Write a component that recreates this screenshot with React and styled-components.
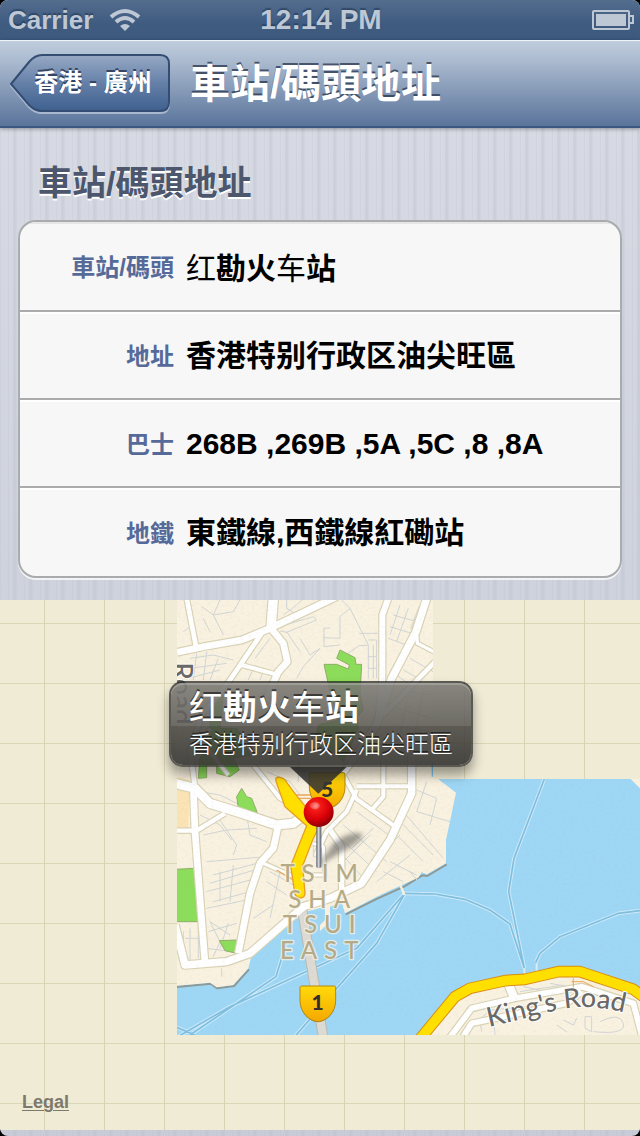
import React from "react";
import styled, { createGlobalStyle } from "styled-components";

const sans = `"Liberation Sans", "Noto Sans CJK TC", "Noto Sans CJK SC", sans-serif`;

const Global = createGlobalStyle`
  *, *::before, *::after { box-sizing: border-box; }
  body { margin: 0; background: #000; font-family: ${sans}; }
  h1, h2, p, dl, dt, dd { margin: 0; }
`;

const Screen = styled.div`
  display: flex;
  flex-direction: column;
  min-height: 100vh;
  overflow: hidden;
  border-radius: 8px;
  background:
    repeating-linear-gradient(90deg, transparent 0 13px, rgba(180, 188, 206, 0.3) 13px 16px),
    repeating-linear-gradient(90deg, rgba(180, 188, 206, 0.18) 0 1px, transparent 1px 8px),
    linear-gradient(#d9dce4, #ced2dc 600px, #c9ccd7);
`;

const StatusBar = styled.div`
  display: grid;
  grid-template-columns: 1fr auto 1fr;
  align-items: center;
  height: 40px;
  padding: 0 6px 0 8px;
  background: linear-gradient(#536d8e, #3f5b80 60%, #3e5a7f);
  color: #bec8d5;
  font-weight: bold;
  text-shadow: 0 -2px 1px rgba(30, 50, 80, 0.55);
`;

const Carrier = styled.span`
  display: flex;
  align-items: center;
  gap: 16px;
  font-size: 26px;
  line-height: 40px;
`;

const Clock = styled.time`
  font-size: 28px;
  line-height: 40px;
`;

const Battery = styled.svg`
  justify-self: end;
`;

const NavBar = styled.header`
  position: relative;
  z-index: 1;
  display: flex;
  align-items: center;
  gap: 20px;
  height: 88px;
  padding: 0 10px;
  border-top: 1px solid #eef3f8;
  border-bottom: 2px solid #3a5781;
  background: linear-gradient(#c0cddd, #a9b9ce 25%, #5a749b);
  box-shadow: 0 1px 4px rgba(0, 0, 0, 0.35);
`;

const BackButton = styled.button`
  position: relative;
  width: 160px;
  height: 60px;
  padding: 0 0 2px 6px;
  border: 0;
  background: none;
  color: #fff;
  font: bold 24px/58px ${sans};
  white-space: nowrap;
  text-shadow: 0 -2px 0 rgba(30, 45, 75, 0.75);
`;

const BackShape = styled.svg`
  position: absolute;
  inset: 0;
  z-index: -1;
`;

const Title = styled.h1`
  color: #fff;
  font-size: 40px;
  font-weight: bold;
  line-height: 60px;
  white-space: nowrap;
  text-shadow: 0 -2px 0 rgba(40, 52, 75, 0.75);
`;

const Details = styled.section`
  padding: 28px 18px 22px;
`;

const SectionTitle = styled.h2`
  padding-left: 20px;
  margin-bottom: 10px;
  color: #4c566c;
  font-size: 34px;
  font-weight: bold;
  line-height: 54px;
  text-shadow: 0 2px 0 #fff;
`;

const Card = styled.dl`
  overflow: hidden;
  border: 2px solid #aaabad;
  border-radius: 18px;
  background: #f7f7f7;
  box-shadow: 0 2px 0 rgba(255, 255, 255, 0.75);
`;

const Row = styled.div`
  display: grid;
  grid-template-columns: 154px 1fr;
  align-items: center;
  gap: 12px;
  height: 88px;
  padding-top: 2px;
  box-shadow: inset 0 2px 0 ${(p) => (p.$first ? "#e6e6e6" : "#fff")};
  & + & { border-top: 2px solid #aaabad; }
  &:last-child { height: 90px; }
`;

const Label = styled.dt`
  padding-top: 2px;
  color: #566a99;
  font-size: 24px;
  font-weight: bold;
  line-height: 40px;
  text-align: right;
  white-space: nowrap;
`;

const Value = styled.dd`
  color: #000;
  font-size: 30px;
  font-weight: bold;
  line-height: 40px;
  white-space: nowrap;
`;

const Light = styled.span`
  font-family: "Noto Sans CJK SC", sans-serif;
  font-weight: normal;
`;

const MapView = styled.main`
  position: relative;
  display: flex;
  justify-content: center;
  height: 530px;
  overflow: hidden;
  background:
    linear-gradient(90deg, #d9d3b3 1px, transparent 1px) calc(50% - 6px) 0 / 60px 60px,
    linear-gradient(#dcd6b7 1px, transparent 1px) 0 23px / 60px 60px,
    #f0ebd5;
`;

const MapArt = styled.svg`
  flex: none;
  width: 640px;
  height: 530px;
`;

const Callout = styled.div`
  position: absolute;
  top: 81px;
  left: calc(50% - 151px);
  width: 304px;
  height: 86px;
  padding: 4px 18px;
  border: 2px solid rgba(40, 40, 38, 0.75);
  border-radius: 14px;
  background: linear-gradient(rgba(125, 123, 118, 0.9), rgba(88, 86, 82, 0.86) 52%, rgba(68, 66, 62, 0.86) 52%, rgba(56, 55, 52, 0.92));
  background-clip: padding-box;
  box-shadow: 0 8px 12px rgba(0, 0, 0, 0.38), inset 0 2px 0 rgba(255, 255, 255, 0.2);
  color: #fff;
  white-space: nowrap;
  text-shadow: 0 -2px 0 rgba(0, 0, 0, 0.55);
`;

const CalloutTitle = styled.p`
  font-size: 34px;
  font-weight: bold;
  line-height: 38px;
`;

const CalloutText = styled.p`
  font-size: 24px;
  font-weight: 300;
  line-height: 36px;
`;

const Legal = styled.a`
  position: absolute;
  left: 22px;
  bottom: 18px;
  color: #7d796c;
  font-size: 18px;
  font-weight: bold;
  line-height: 20px;
  text-decoration: underline;
  text-decoration-thickness: 1px;
  text-underline-offset: 2px;
`;

const thinStreets = `
M150 15L130 60L160 120 M95 35L130 60L190 50L210 15 M340 60L380 30L395 15 M345 90L430 65L440 75L350 112L330 108 M350 15V40L375 55
M510 65L540 40L515 15 M510 65V130L462 128 M540 40L595 150L567 152L520 185 M462 155V100L480 98 M462 155L510 150 M390 130L420 180L450 160L400 215L380 250 M350 110L390 170
M567 115H625 M595 135H620V250 M595 150V250 M610 150V250 M595 185H620 M595 220H620 M670 60L740 80 M660 95L725 115 M655 130L710 150 M690 30L660 120 M715 40L680 140
M60 190L130 180L190 195 M60 220L170 205 M55 250L150 225 M80 175L70 255 M110 170L100 255 M145 190L120 255 M40 110L60 95 M120 110L100 70 M255 190L300 130 M250 220L235 255 M280 230L270 255
M680 240L720 270 M700 225L745 250 M720 190L789 230 M700 290L789 300 M680 340L789 370 M670 390L780 410 M650 430L770 450 M720 280L680 460 M760 290L720 480
M385 430V560 M290 530L360 560L390 600 M90 590L150 600L250 650 M100 720L170 705L260 700 M110 800L290 785 M130 840L280 800 M120 865L270 820 M110 890L260 850 M130 920L240 890 M150 830V920 M190 810L180 920 M110 940L230 915 M140 660L200 750L190 780 M230 660L240 720L290 740 M90 660L150 690L185 735
M300 830L370 870 M290 860L350 900 M330 830L300 970 M250 970L310 930 M120 980L180 1020 M115 1010L200 985 M60 1000V1100 M40 1010V1085 M85 980V1090 M45 1030H85 M120 980L150 1040L130 1085 M110 1060L190 1070 M175 985L150 1060 M155 1120V1145
M520 690L650 800 M500 720L620 830 M490 750L590 860 M560 650L670 730 M545 760L610 700 M520 800L600 720 M640 770L690 720 M690 680L790 780 M680 720L760 800 M700 650L820 790 M770 560L740 650L840 680 M740 585L800 610L780 690 M660 800L740 840 M640 830L700 860 M720 830L745 860 M620 860L720 780 M430 750L460 760V790L430 785Z
M860 1310L910 1250L1050 1215 M890 1310L960 1245L1120 1230 M1060 1175L1110 1185L1115 1215 M1140 1165L1220 1180 M1050 1190L1180 1170 M1160 1290L1190 1310 M1180 1275L1210 1290L1220 1270 M1245 1265H1265V1310L1245 1300Z M1290 1280Q1350 1250 1360 1285T1270 1310 M930 1280L935 1310 M970 1270L975 1320`;

const streets = [
  ["M50 10L80 165", 14], ["M21 172L100 155L215 135L300 100L500 5", 20],
  ["M310 10L303 100", 28], ["M303 100L340 145L352 200L325 230L280 330", 20],
  ["M275 115L180 255L95 360L60 470L75 575", 14], ["M215 210L325 240", 12],
  ["M655 10L637 60V250L625 380L560 480L500 560", 18],
  ["M770 10L738 110L665 250L620 390L560 480", 22], ["M740 115L742 145L795 172", 10],
  ["M795 200L640 360", 14], ["M120 400L95 440L175 540", 10], ["M250 510L330 610L400 650", 12],
  ["M15 565L75 580L120 625L200 650L320 690L370 685L440 630", 27],
  ["M70 580L75 710L95 975L105 1105", 20], ["M15 707H80L165 655", 13],
  ["M325 690L310 760L270 805L240 895L205 1075", 20], ["M270 800L365 842", 10],
  ["M725 480V595L660 735L575 865L480 910L400 935L240 1075L170 1100L45 1110L15 990", 22],
  ["M640 490V605L605 645", 12], ["M560 574H725", 12], ["M520 540L560 612L680 698", 12],
  ["M560 585L530 650L470 710L440 775", 12], ["M480 705L515 755V890", 16], ["M425 840H465L460 755L430 745", 9],
  ["M830 1340L905 1240L1035 1210L1235 1175L1390 1225L1415 1320", 17],
  ["M870 1340L905 1285L1190 1225L1235 1190", 17], ["M1015 1165L1035 1215", 25],
];

const ferries = `M15 1330L180 1235L560 1060L700 900 M60 1320L200 1225L318 1145L350 1040 M15 1295L75 1320 M370 1330L500 1180L620 1045L705 895
M700 895L795 897L885 913L960 945L1020 987L1063 1120 M1123 552L1032 790L1016 890L1063 1120 M1097 1102L1110 1075L1170 1025L1345 955L1410 947`;

const mainRoad = "M735 1350L855 1205L900 1180L1005 1157L1065 1153L1165 1130H1230L1390 1183L1420 1205";
const highway = "M319 562Q312 545 330 547Q345 550 350 562L382 605L432 665L445 700L428 735L398 812L405 895Q405 908 392 909Q376 908 374 893L362 812L410 692L345 635Z";

function Shield({ x, y, children }) {
  return (
    <g>
      <path d={`M${x} ${y + 6}q0-5 5-5h97q5 0 5 5v38c0 36-27 62-53 64c-27-2-54-28-54-64z`} fill="#6b5a20" opacity=".5" />
      <path d={`M${x} ${y + 4}q0-5 5-5h97q5 0 5 5v38c0 36-27 62-53 64c-27-2-54-28-54-64z`} fill="url(#shield)" stroke="#b58a10" strokeWidth="3" />
      <text x={x + 53} y={y + 72} textAnchor="middle" fontFamily="Lato, sans-serif" fontWeight="900" fontSize="63" fill="#33302a">{children}</text>
    </g>
  );
}

function StreetMap() {
  return (
    <MapArt viewBox="-510 15 1920 1590" role="img" aria-label="Tsim Sha Tsui East">
      <defs>
        <clipPath id="tiles"><path d="M21 15H789V552H1410V1320H21Z" /></clipPath>
        <linearGradient id="shield" x2="0" y2="1"><stop stopColor="#ffda0a" /><stop offset="1" stopColor="#f5a800" /></linearGradient>
        <radialGradient id="ball" cx=".4" cy=".3" r=".7">
          <stop stopColor="#ff8078" /><stop offset=".22" stopColor="#f51a16" /><stop offset=".65" stopColor="#d80008" /><stop offset="1" stopColor="#8e0006" />
        </radialGradient>
        <linearGradient id="needle"><stop stopColor="#555b66" /><stop offset=".45" stopColor="#d5d8df" /><stop offset="1" stopColor="#4d535e" /></linearGradient>
        <filter id="soft" x="-30%" y="-30%" width="160%" height="160%"><feGaussianBlur stdDeviation="8" /></filter>
        <filter id="paper" x="0" y="0" width="100%" height="100%">
          <feTurbulence type="fractalNoise" baseFrequency=".09 .14" numOctaves="2" seed="4" />
          <feColorMatrix values="0 0 0 0 .4  0 0 0 0 .4  0 0 0 0 .35  1.6 0 0 0 -.72" />
        </filter>
      </defs>
      <g clipPath="url(#tiles)" strokeLinejoin="round" fill="none">
        <rect x="21" y="15" width="1389" height="1305" fill="#9ed7f5" />
        <path d={ferries} stroke="#cdeafa" strokeWidth="11" />
        <path d={ferries} stroke="#7fbfe0" strokeWidth="5" />
        <path d="M15 1173L120 1163L140 1177L190 1170L235 1120 M525 955L620 908L700 872L755 838L770 840L828 805" stroke="#8d9a98" strokeWidth="6" transform="translate(2 3)" />
        <path d="M15 0H789V500L805 553L858 593L828 735V805L770 838L755 832L745 848L700 868L620 905L525 955L515 922L480 935V980L450 1008V990L465 975V935L390 955L245 1080L235 1120L190 1170L140 1177L120 1163L15 1173Z" fill="#faf2e0" />
        <path d="M690 868L703 900" stroke="#faf2e0" strokeWidth="7" />
        <path d="M1375 545L1415 585V545Z" fill="#faf2e0" />
        <path d="M720 1340L855 1205L1005 1157L1230 1130L1420 1205V1340Z" fill="#faf2e0" />
        <path d="M21 545L60 555L55 700H21Z" fill="#fbe3b4" />
        <path d="M785 505L790 500V545H785Z" fill="#7fc7ee" />
        <path d={thinStreets} stroke="#d0d5d5" strokeWidth="3" />
        <g fill="#8cdd5a" stroke="#8fae68" strokeWidth="3">
          <path d="M510 165L555 188L558 208H575L570 300L580 345L562 365L565 400L520 500L440 420L445 390L505 375L480 290L462 208H500L535 222L538 210L500 190Z" />
          <path d="M160 300L150 400H200L240 480L190 490L208 525L180 545L140 535V510H110V548L85 550L90 490L120 440V330Z" />
          <path d="M200 605L215 580L230 605L245 610L262 653L205 638Z" />
          <path d="M15 823L75 820L85 980H15Z" />
          <path d="M148 1037L200 1035V1075L165 1067Z" />
        </g>
        <path d="M720 100L745 35L760 50L735 115Z" fill="#dedbd0" />
        {streets.map(([d, w]) => <path key={d} d={d} stroke="#d9d3b6" strokeWidth={w + 7} />)}
        <path d="M395 935L460 1330" stroke="#b9bab4" strokeWidth="31" />
        <path d="M395 935L460 1330" stroke="#dedbd4" strokeWidth="25" />
        {streets.map(([d, w]) => <path key={d} d={d} stroke="#fff" strokeWidth={w} />)}
        <path d="M370 600H440M380 610H430M320 825L370 855" stroke="#eda75b" strokeWidth="4" />
        <path d="M1205 1160L1240 1160L1270 1175M1210 1150V1185" stroke="#eda75b" strokeWidth="3" />
        <path d="M1063 1120V1140M1100 1105V1135" stroke="#dcebec" strokeWidth="6" />
        <rect x="21" y="15" width="1389" height="1305" filter="url(#paper)" opacity=".12" />
        <path d={highway} fill="#ffdf00" stroke="#e5a022" strokeWidth="4" />
        <path d={mainRoad} stroke="#d88d13" strokeWidth="35" />
        <path d={mainRoad} stroke="#ffdf00" strokeWidth="29" />
        <g fontFamily="Lato, sans-serif" fontWeight="500" paintOrder="stroke">
          <path id="kings" d="M957 1296C1070 1270 1130 1252 1190 1240C1250 1230 1310 1238 1400 1262" />
          <text fontSize="81" fill="#6a6966" stroke="#fff" strokeWidth="6"><textPath href="#kings">King's Road</textPath></text>
          <text transform="translate(6 202) rotate(90)" fontSize="84" fill="#6a6966" stroke="#fff" strokeWidth="6">Road</text>
          <text fontSize="72" fill="#b5aa87" stroke="#fbf6e8" strokeWidth="8" strokeOpacity=".7" textAnchor="middle" letterSpacing="21">
            <tspan x="458" y="862">TSIM</tspan>
            <tspan x="458" y="939">SHA</tspan>
            <tspan x="458" y="1015">TSUI</tspan>
            <tspan x="458" y="1092">EAST</tspan>
          </text>
        </g>
        <Shield x={390} y={1174}>1</Shield>
        <Shield x={418} y={534}>5</Shield>
      </g>
      <path d="M448 808L490 745Q535 708 575 715Q585 730 535 760Q490 785 448 812Z" fill="#444" opacity=".5" filter="url(#soft)" />
      <rect x="439" y="685" width="15" height="134" rx="5" fill="url(#needle)" />
      <path d="M360 516L445 596L530 516Z" fill="#383734" opacity=".88" />
      <circle cx="446" cy="651" r="45" fill="url(#ball)" />
      <ellipse cx="434" cy="632" rx="15" ry="10" fill="#fff" opacity=".2" />
    </MapArt>
  );
}

const facts = [
  ["車站/碼頭", <><Light>红</Light>勘火<Light>车</Light>站</>],
  ["地址", "香港特别行政区油尖旺區"],
  ["巴士", "268B ,269B ,5A ,5C ,8 ,8A"],
  ["地鐵", "東鐵線,西鐵線紅磡站"],
];

export default function App() {
  return (
    <>
      <Global />
      <Screen>
        <StatusBar>
          <Carrier>
            Carrier
            <svg width="32" height="24" viewBox="0 0 32 24" fill="none" stroke="#bec8d5" strokeWidth="4" aria-hidden="true">
              <path d="M2 9Q16-3 30 9" />
              <path d="M7 14Q16 6 25 14" />
              <path d="M16 23L11 18Q16 14 21 18Z" fill="#bec8d5" stroke="none" />
            </svg>
          </Carrier>
          <Clock>12:14 PM</Clock>
          <Battery width="42" height="20" viewBox="0 0 42 20" fill="none" stroke="#bec8d5" strokeWidth="2" aria-hidden="true">
            <rect x="1" y="1" width="36" height="18" rx="1" />
            <rect x="4" y="4" width="30" height="12" fill="#bec8d5" stroke="none" />
            <path d="M38 6H41V13H38" />
          </Battery>
        </StatusBar>
        <NavBar>
          <BackButton type="button">
            <BackShape width="160" height="60" viewBox="0 0 160 60" aria-hidden="true">
              <defs>
                <linearGradient id="back" x2="0" y2="1">
                  <stop stopColor="#97a9c4" /><stop offset=".5" stopColor="#6580a8" /><stop offset="1" stopColor="#3f608f" />
                </linearGradient>
              </defs>
              <path d="M1 32L19 10Q25 3 32 3H150Q159 3 159 12V50Q159 59 150 59H32Q25 59 19 53Z" fill="none" stroke="#a9b8cf" strokeWidth="2" />
              <path d="M1 30L19 8Q25 1 32 1H150Q159 1 159 10V48Q159 57 150 57H32Q25 57 19 51Z" fill="url(#back)" stroke="#344d72" strokeWidth="2" />
            </BackShape>
            香港 - 廣州
          </BackButton>
          <Title>車站/碼頭地址</Title>
        </NavBar>
        <Details>
          <SectionTitle>車站/碼頭地址</SectionTitle>
          <Card>
            {facts.map(([label, value], i) => (
              <Row key={label} $first={i === 0}>
                <Label>{label}</Label>
                <Value>{value}</Value>
              </Row>
            ))}
          </Card>
        </Details>
        <MapView>
          <StreetMap />
          <Callout>
            <CalloutTitle><Light>红</Light>勘火<Light>车</Light>站</CalloutTitle>
            <CalloutText>香港特别行政区油尖旺區</CalloutText>
          </Callout>
          <Legal href="#legal">Legal</Legal>
        </MapView>
      </Screen>
    </>
  );
}
